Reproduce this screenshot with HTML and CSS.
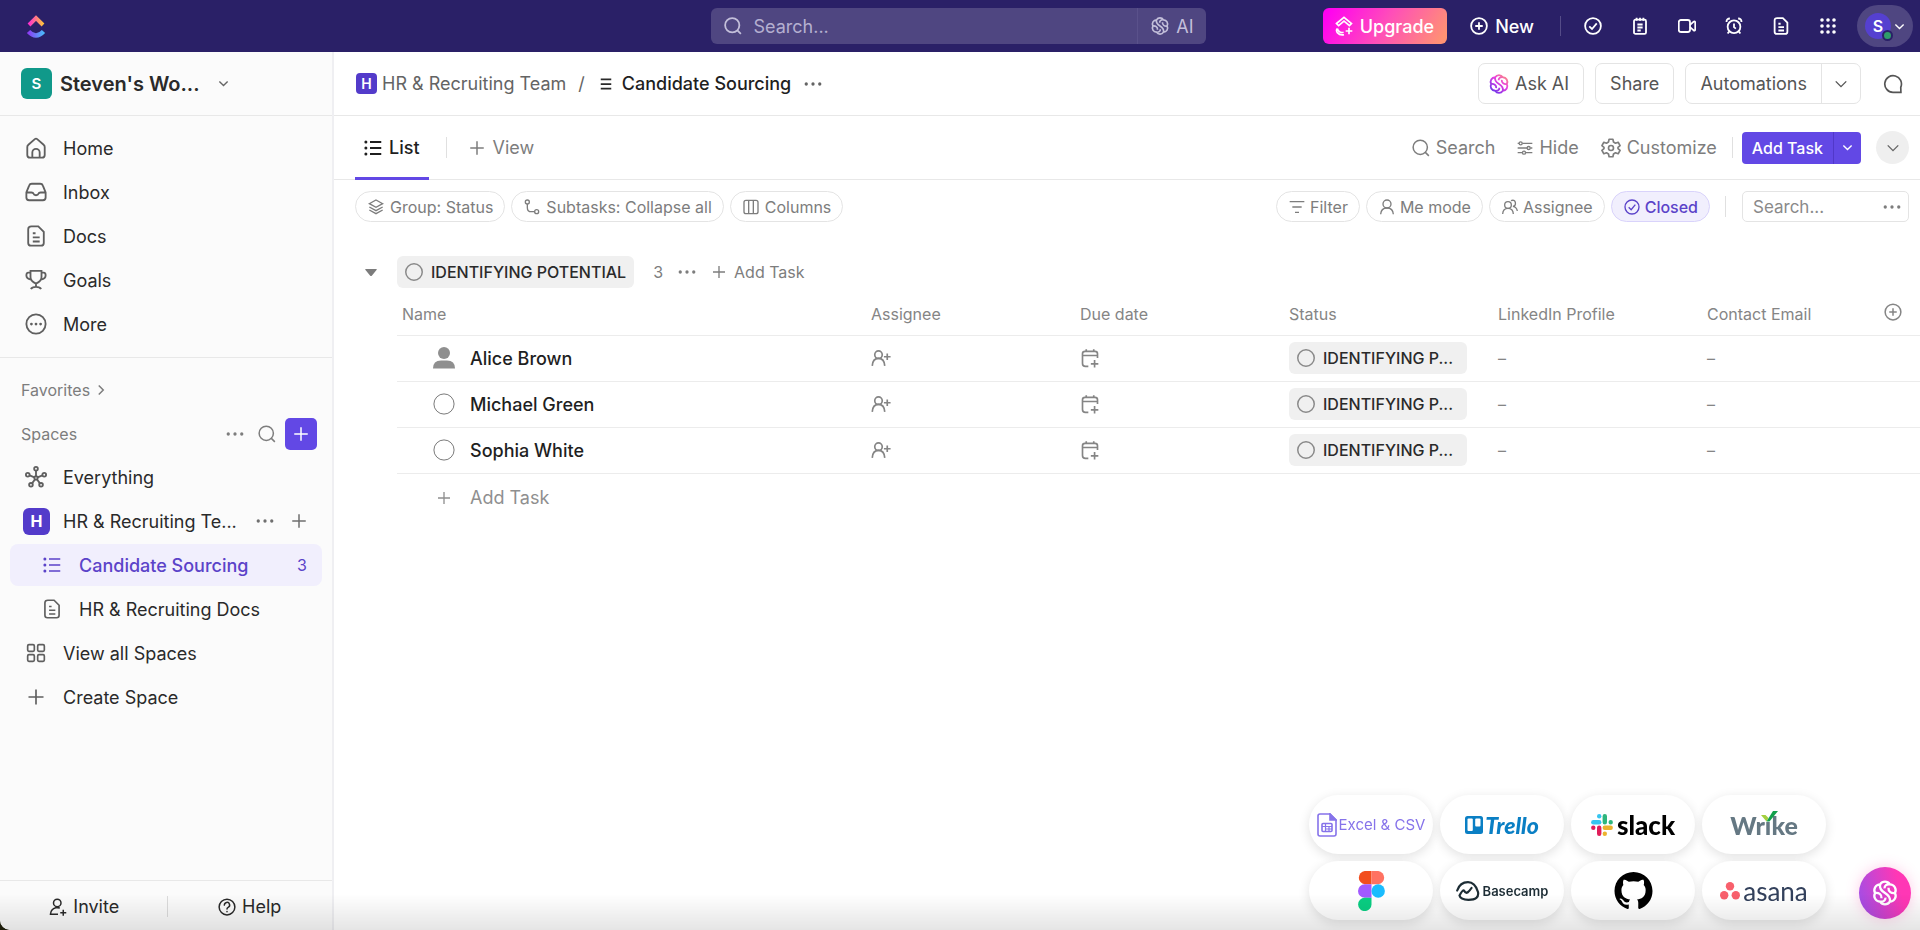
FILE: index.html
```html
<!DOCTYPE html>
<html lang="en">
<head>
    <meta charset="UTF-8">
    <meta name="viewport" content="width=device-width, initial-scale=1.0">
    <title>Candidate Sourcing | HR &amp; Recruiting Team</title>
    <link rel="stylesheet" href="styles.css">
</head>
<body>
    <!-- Icon sprite -->
    <svg class="sprite" aria-hidden="true">
        <defs>
            <linearGradient id="ai-grad" x1="1" y1="0" x2="0.2" y2="1">
                <stop offset="0" stop-color="#ff9a70"/>
                <stop offset="0.45" stop-color="#e83ee0"/>
                <stop offset="1" stop-color="#6a35ea"/>
            </linearGradient>
            <linearGradient id="logo-top" x1="0" y1="0" x2="1" y2="0">
                <stop offset="0" stop-color="#ff2fd0"/>
                <stop offset="1" stop-color="#ffc23d"/>
            </linearGradient>
            <linearGradient id="logo-bottom" x1="0" y1="0" x2="1" y2="0">
                <stop offset="0" stop-color="#8b3df5"/>
                <stop offset="1" stop-color="#4bb9fb"/>
            </linearGradient>
        </defs>
        <symbol id="i-search" viewBox="0 0 24 24"><circle cx="11" cy="11" r="9.5"/><path d="M17.5 17.5L22.5 22.5"/></symbol>
        <symbol id="i-ai" viewBox="0 0 24 24"><path d="M7.8 4.6A5 5 0 0 1 16.2 4.6A5 5 0 0 1 20.5 12A5 5 0 0 1 16.2 19.4A5 5 0 0 1 7.8 19.4A5 5 0 0 1 3.5 12A5 5 0 0 1 7.8 4.6C7 8.5 9.5 10.5 12 12S17 15.5 16.2 19.4M3.5 12C6.5 11.6 9.3 13 9 16.5M20.5 12C17.5 12.4 14.7 11 15 7.5M16.2 4.6C13.5 4.2 11.5 5.5 11.6 8M7.8 19.4C10.5 19.8 12.5 18.5 12.4 16"/></symbol>
        <symbol id="i-plus" viewBox="0 0 24 24"><path d="M12 3V21M3 12H21"/></symbol>
        <symbol id="i-plus-circle" viewBox="0 0 24 24"><circle cx="12" cy="12" r="10.5"/><path d="M12 7V17M7 12H17"/></symbol>
        <symbol id="i-check-circle" viewBox="0 0 24 24"><circle cx="12" cy="12" r="10.5"/><path d="M7 12.5L10.7 16L17 8.5"/></symbol>
        <symbol id="i-notepad" viewBox="0 0 24 24"><rect x="4" y="3.5" width="16" height="19" rx="2"/><path d="M7.5 1V5M12 1V5M16.5 1V5M8.5 10H15.5M8.5 14H15.5M8.5 18H13"/></symbol>
        <symbol id="i-video" viewBox="0 0 24 24"><rect x="1" y="4" width="15" height="16" rx="3"/><path d="M16 10.5L20.5 6.5Q23 5 23 8V16Q23 19 20.5 17.5L16 13.5"/></symbol>
        <symbol id="i-alarm" viewBox="0 0 24 24"><circle cx="12" cy="13" r="8.5"/><path d="M12 8.5V13.5L14.5 15.5M2 6.5Q2 2 6.5 2M22 6.5Q22 2 17.5 2M5.5 19.5L3.5 22M18.5 19.5L20.5 22"/></symbol>
        <symbol id="i-doc" viewBox="0 0 24 24"><path d="M7 1.5H14.5L20.5 7.5V19.5Q20.5 22.5 17.5 22.5H6.5Q3.5 22.5 3.5 19.5V4.5Q3.5 1.5 7 1.5ZM8.5 9H11.5M8.5 13.5H16M8.5 18H16"/></symbol>
        <symbol id="i-grid" viewBox="0 0 24 24"><path d="M4 4h.01M12 4h.01M20 4h.01M4 12h.01M12 12h.01M20 12h.01M4 20h.01M12 20h.01M20 20h.01" stroke-width="4.8" stroke-linecap="round"/></symbol>
        <symbol id="i-dots" viewBox="0 0 24 24"><path d="M3 12h.01M12 12h.01M21 12h.01" stroke-width="4.4" stroke-linecap="round"/></symbol>
        <symbol id="i-down" viewBox="0 0 24 24"><path d="M3 7.5L12 16.5L21 7.5"/></symbol>
        <symbol id="i-right" viewBox="0 0 24 24"><path d="M7.5 3L16.5 12L7.5 21"/></symbol>
        <symbol id="i-home" viewBox="0 0 24 24"><path d="M2.5 11Q2.5 9.5 3.7 8.5L10.7 2.3Q12 1.2 13.3 2.3L20.3 8.5Q21.5 9.5 21.5 11V19.5Q21.5 22.5 18.5 22.5H5.5Q2.5 22.5 2.5 19.5ZM8 22V17A4 4 0 0 1 16 17V22"/></symbol>
        <symbol id="i-inbox" viewBox="0 0 24 24"><path d="M1.5 12.5L4.5 5Q5.2 3 7.5 3H16.5Q18.8 3 19.5 5L22.5 12.5V18Q22.5 21 19.5 21H4.5Q1.5 21 1.5 18ZM1.5 12.5H7Q9 12.5 9.3 14Q9.8 15.5 12 15.5T14.7 14Q15 12.5 17 12.5H22.5"/></symbol>
        <symbol id="i-trophy" viewBox="0 0 24 24"><path d="M6 2H18V9Q18 13 12 16Q6 13 6 9ZM6 4H3.5Q1.5 4 1.5 7Q1.5 10.5 6.5 11.5M18 4H20.5Q22.5 4 22.5 7Q22.5 10.5 17.5 11.5M12 16V19M6.5 22Q7.5 19.5 12 19.5T17.5 22"/></symbol>
        <symbol id="i-more" viewBox="0 0 24 24"><circle cx="12" cy="12" r="10.5"/><path d="M7 12h.01M12 12h.01M17 12h.01" stroke-width="3" stroke-linecap="round"/></symbol>
        <symbol id="i-everything" viewBox="0 0 24 24"><circle cx="12" cy="13" r="1.8"/><circle cx="12" cy="3" r="2"/><circle cx="3" cy="9.5" r="2"/><circle cx="21" cy="9.5" r="2"/><circle cx="6.5" cy="20.5" r="2"/><circle cx="17.5" cy="20.5" r="2"/><path d="M12 5V11M5 10.3L10.3 12.4M19 10.3L13.7 12.4M7.7 19L11 14.5M16.3 19L13 14.5"/></symbol>
        <symbol id="i-list" viewBox="0 0 24 24"><path d="M8 4H23M8 12H23M8 20H23"/><path d="M2.5 4h.01M2.5 12h.01M2.5 20h.01" stroke-width="4" stroke-linecap="round"/></symbol>
        <symbol id="i-lines" viewBox="0 0 24 24"><path d="M3 4H21M3 12H21M3 20H21"/></symbol>
        <symbol id="i-spaces" viewBox="0 0 24 24"><rect x="2" y="2" width="8" height="8" rx="1.5"/><rect x="14" y="2" width="8" height="8" rx="1.5"/><rect x="2" y="14" width="8" height="8" rx="1.5"/><rect x="14" y="14" width="8" height="8" rx="1.5"/></symbol>
        <symbol id="i-invite" viewBox="0 0 24 24"><circle cx="11" cy="6.5" r="5"/><path d="M14.5 13.5Q12 12.5 9 13Q2.5 14.5 2 21.5H12M19 15.5V23.5M15 19.5H23"/></symbol>
        <symbol id="i-help" viewBox="0 0 24 24"><circle cx="12" cy="12" r="10.5"/><path d="M8.5 9.5A3.5 3.5 0 1 1 13.5 12.5Q12 13.2 12 14.8M12 18V18.2" stroke-linecap="round"/></symbol>
        <symbol id="i-chat" viewBox="0 0 24 24"><path d="M21.5 22L21.3 16A10 10 0 1 0 12 22Z"/></symbol>
        <symbol id="i-sliders" viewBox="0 0 24 24"><path d="M1 5H3M8 5H23M1 12H15M20 12H23M1 19H8M13 19H23"/><circle cx="5.5" cy="5" r="2.3"/><circle cx="17.5" cy="12" r="2.3"/><circle cx="10.5" cy="19" r="2.3"/></symbol>
        <symbol id="i-gear" viewBox="0 0 24 24"><path d="M9.7 1.5H14.3L15 4.8L17.4 6.2L20.6 5.1L22.9 9.1L20.4 11.3V12.7L22.9 14.9L20.6 18.9L17.4 17.8L15 19.2L14.3 22.5H9.7L9 19.2L6.6 17.8L3.4 18.9L1.1 14.9L3.6 12.7V11.3L1.1 9.1L3.4 5.1L6.6 6.2L9 4.8Z" stroke-linejoin="round"/><circle cx="12" cy="12" r="3"/></symbol>
        <symbol id="i-layers" viewBox="0 0 24 24"><path d="M12 1.5L22 7L12 12.5L2 7ZM2 12L12 17.5L22 12M2 16.5L12 22L22 16.5"/></symbol>
        <symbol id="i-subtask" viewBox="0 0 24 24"><circle cx="5" cy="4.5" r="3"/><circle cx="19" cy="19" r="3"/><path d="M5 7.5V13Q5 19 11 19H16"/></symbol>
        <symbol id="i-columns" viewBox="0 0 24 24"><rect x="1.5" y="2" width="21" height="20" rx="3"/><path d="M8.5 2V22M15.5 2V22"/></symbol>
        <symbol id="i-filter" viewBox="0 0 24 24"><path d="M1 4H23M5 12H19M9 20H15"/></symbol>
        <symbol id="i-user" viewBox="0 0 24 24"><circle cx="12" cy="7.5" r="6"/><path d="M2.5 23Q3 13.5 12 13.5T21.5 23"/></symbol>
        <symbol id="i-users" viewBox="0 0 24 24"><circle cx="9" cy="9" r="5"/><path d="M1 22.5Q1.5 14 9 14T17 22.5M13.5 2.5Q18.5 0.5 20 5Q21 10 16.5 11Q22 12 23 18"/></symbol>
        <symbol id="i-user-add" viewBox="0 0 24 24"><circle cx="9" cy="8" r="4.5"/><path d="M1.500 21.5Q2 12.5 9 12.5T16.5 21.5M19.5 6.5V14.5M15.5 10.5H23.5"/></symbol>
        <symbol id="i-date-add" viewBox="0 0 24 24"><path d="M10 22H6.5Q3 22 3 18.5V7Q3 4 6 4H18Q21 4 21 7V12M3 9H21M7.5 1.5V4M16.5 1.5V4M17.5 14.5V23.5M13 19H22"/></symbol>
        <symbol id="i-circle" viewBox="0 0 24 24"><circle cx="12" cy="12" r="11"/></symbol>
        <symbol id="i-upgrade" viewBox="0 0 24 24"><path d="M3 9L12 1.5L21 9L18.5 11.5L12 6L5.5 11.5ZM4 15Q6 21 11.5 19.5M4 15Q2 17 4 20Q7 23.5 12 22.5M18 14V22M14 18H22"/></symbol>
    </svg>

    <header class="topbar">
        <a class="brand" href="#" aria-label="ClickUp home">
            <svg width="20" height="30" viewBox="0 0 20 30">
                <path d="M3 14L10 7L17 14" fill="none" stroke="url(#logo-top)" stroke-width="4"/>
                <path d="M2.500 20.500Q10 28.500 17.500 20.500" fill="none" stroke="url(#logo-bottom)" stroke-width="4.500"/>
            </svg>
        </a>
        <div class="global-search">
            <svg class="icon s18"><use href="#i-search"/></svg>
            <input type="text" placeholder="Search..." aria-label="Search workspace">
            <button class="search-ai"><svg class="icon s20"><use href="#i-ai"/></svg>AI</button>
        </div>
        <div class="top-actions">
            <button class="upgrade"><svg class="icon s20"><use href="#i-upgrade"/></svg>Upgrade</button>
            <button class="new"><svg class="icon s18"><use href="#i-plus-circle"/></svg>New</button>
            <span class="top-divider"></span>
            <div class="top-icons">
                <button aria-label="Tasks"><svg class="icon s18"><use href="#i-check-circle"/></svg></button>
                <button aria-label="Notepad"><svg class="icon s18"><use href="#i-notepad"/></svg></button>
                <button aria-label="Clips"><svg class="icon s18"><use href="#i-video"/></svg></button>
                <button aria-label="Reminders"><svg class="icon s18"><use href="#i-alarm"/></svg></button>
                <button aria-label="Docs"><svg class="icon s18"><use href="#i-doc"/></svg></button>
                <button aria-label="Apps"><svg class="icon s18"><use href="#i-grid"/></svg></button>
            </div>
            <button class="account" aria-label="Account">
                <span class="avatar">S<span class="online"></span></span>
                <svg class="icon s10"><use href="#i-down"/></svg>
            </button>
        </div>
    </header>

    <div class="app">
        <aside class="sidebar">
            <button class="workspace">
                <span class="workspace-logo">S</span>
                <span class="workspace-name">Steven's Wo...</span>
                <svg class="icon s10"><use href="#i-down"/></svg>
            </button>
            <nav class="side-nav main-nav">
                <a href="#"><svg class="icon s22"><use href="#i-home"/></svg>Home</a>
                <a href="#"><svg class="icon s22"><use href="#i-inbox"/></svg>Inbox</a>
                <a href="#"><svg class="icon s22"><use href="#i-doc"/></svg>Docs</a>
                <a href="#"><svg class="icon s22"><use href="#i-trophy"/></svg>Goals</a>
                <a href="#"><svg class="icon s22"><use href="#i-more"/></svg>More</a>
            </nav>
            <div class="side-title favorites">Favorites <svg class="icon s12"><use href="#i-right"/></svg></div>
            <div class="side-title spaces">
                <span>Spaces</span>
                <button aria-label="Space options"><svg class="icon s18"><use href="#i-dots"/></svg></button>
                <button aria-label="Search spaces"><svg class="icon s18"><use href="#i-search"/></svg></button>
                <button class="add-space" aria-label="Add space"><svg class="icon s18"><use href="#i-plus"/></svg></button>
            </div>
            <nav class="side-nav">
                <a href="#"><svg class="icon s22"><use href="#i-everything"/></svg>Everything</a>
                <div class="space-row">
                    <a href="#"><span class="space-logo">H</span>HR &amp; Recruiting Te...</a>
                    <button aria-label="Space menu"><svg class="icon s18"><use href="#i-dots"/></svg></button>
                    <button aria-label="Add to space"><svg class="icon s18"><use href="#i-plus"/></svg></button>
                </div>
                <a class="child active" href="#"><svg class="icon s18"><use href="#i-list"/></svg>Candidate Sourcing<span class="count">3</span></a>
                <a class="child" href="#"><svg class="icon s20"><use href="#i-doc"/></svg>HR &amp; Recruiting Docs</a>
                <a href="#"><svg class="icon s20"><use href="#i-spaces"/></svg>View all Spaces</a>
                <a href="#"><svg class="icon s20"><use href="#i-plus"/></svg>Create Space</a>
            </nav>
            <div class="side-footer">
                <button><svg class="icon s18"><use href="#i-invite"/></svg>Invite</button>
                <button><svg class="icon s18"><use href="#i-help"/></svg>Help</button>
            </div>
        </aside>

        <main class="main">
            <div class="bar page-header">
                <nav class="breadcrumb">
                    <span class="space-logo small">H</span>
                    <a href="#">HR &amp; Recruiting Team</a>
                    <span class="slash">/</span>
                    <svg class="icon s14 dark"><use href="#i-lines"/></svg>
                    <span class="current">Candidate Sourcing</span>
                    <button aria-label="List menu"><svg class="icon s18"><use href="#i-dots"/></svg></button>
                </nav>
                <div class="header-actions">
                    <button class="outline-btn"><svg class="icon s22 ai-color"><use href="#i-ai"/></svg>Ask AI</button>
                    <button class="outline-btn">Share</button>
                    <div class="outline-group">
                        <button>Automations</button>
                        <button class="drop" aria-label="Automation options"><svg class="icon s14"><use href="#i-down"/></svg></button>
                    </div>
                    <button class="chat" aria-label="Comments"><svg class="icon s20"><use href="#i-chat"/></svg></button>
                </div>
            </div>

            <div class="bar tabs">
                <button class="tab selected"><svg class="icon s18"><use href="#i-list"/></svg>List</button>
                <button class="tab add-view"><svg class="icon s18"><use href="#i-plus"/></svg>View</button>
                <div class="view-tools">
                    <button><svg class="icon s18"><use href="#i-search"/></svg>Search</button>
                    <button><svg class="icon s16"><use href="#i-sliders"/></svg>Hide</button>
                    <button><svg class="icon s20"><use href="#i-gear"/></svg>Customize</button>
                </div>
                <div class="add-task">
                    <button>Add Task</button>
                    <button class="drop" aria-label="Add task options"><svg class="icon s10"><use href="#i-down"/></svg></button>
                </div>
                <button class="collapse" aria-label="Collapse header"><svg class="icon s14"><use href="#i-down"/></svg></button>
            </div>

            <div class="filters">
                <button class="pill"><svg class="icon s16"><use href="#i-layers"/></svg>Group: Status</button>
                <button class="pill"><svg class="icon s16"><use href="#i-subtask"/></svg>Subtasks: Collapse all</button>
                <button class="pill"><svg class="icon s16"><use href="#i-columns"/></svg>Columns</button>
                <div class="quick-filters">
                    <button class="pill"><svg class="icon s16"><use href="#i-filter"/></svg>Filter</button>
                    <button class="pill"><svg class="icon s16"><use href="#i-user"/></svg>Me mode</button>
                    <button class="pill"><svg class="icon s16"><use href="#i-users"/></svg>Assignee</button>
                    <button class="pill on"><svg class="icon s16"><use href="#i-check-circle"/></svg>Closed</button>
                </div>
                <div class="task-search">
                    <input type="text" placeholder="Search..." aria-label="Search tasks">
                    <button aria-label="Search options"><svg class="icon s18"><use href="#i-dots"/></svg></button>
                </div>
            </div>

            <section class="group">
                <div class="group-header">
                    <button class="toggle" aria-label="Collapse group"><svg width="12" height="7" viewBox="0 0 12 7"><path d="M1 0H11Q12.500 0 11.500 1L7 6.500Q6 7.500 5 6.500L0.500 1Q-0.500 0 1 0Z" fill="#7c7c7c"/></svg></button>
                    <button class="status"><svg class="icon s18"><use href="#i-circle"/></svg>IDENTIFYING POTENTIAL</button>
                    <span class="group-count">3</span>
                    <button aria-label="Group menu"><svg class="icon s18"><use href="#i-dots"/></svg></button>
                    <button class="group-add"><svg class="icon s16"><use href="#i-plus"/></svg>Add Task</button>
                </div>
                <table class="tasks">
                    <colgroup>
                        <col><col class="col-field"><col class="col-field"><col class="col-field"><col class="col-field"><col class="col-email"><col class="col-add">
                    </colgroup>
                    <thead>
                        <tr>
                            <th>Name</th>
                            <th>Assignee</th>
                            <th>Due date</th>
                            <th>Status</th>
                            <th>LinkedIn Profile</th>
                            <th>Contact Email</th>
                            <th class="center"><button aria-label="Add column"><svg class="icon s18"><use href="#i-plus-circle"/></svg></button></th>
                        </tr>
                    </thead>
                    <tbody>
                        <tr>
                            <td><div class="task-name">
                                <svg width="22" height="22" viewBox="0 0 22 22" fill="#8f8f8f"><circle cx="11" cy="6" r="6"/><path d="M0 21.500Q0 13.500 8 13.500H14Q22 13.500 22 21.500Z"/></svg>
                                Alice Brown</div></td>
                            <td><svg class="icon s20"><use href="#i-user-add"/></svg></td>
                            <td><svg class="icon s20"><use href="#i-date-add"/></svg></td>
                            <td><button class="status cell"><svg class="icon s18"><use href="#i-circle"/></svg>IDENTIFYING P...</button></td>
                            <td>–</td>
                            <td>–</td>
                            <td></td>
                        </tr>
                        <tr>
                            <td><div class="task-name"><svg class="icon s22 thin"><use href="#i-circle"/></svg>Michael Green</div></td>
                            <td><svg class="icon s20"><use href="#i-user-add"/></svg></td>
                            <td><svg class="icon s20"><use href="#i-date-add"/></svg></td>
                            <td><button class="status cell"><svg class="icon s18"><use href="#i-circle"/></svg>IDENTIFYING P...</button></td>
                            <td>–</td>
                            <td>–</td>
                            <td></td>
                        </tr>
                        <tr>
                            <td><div class="task-name"><svg class="icon s22 thin"><use href="#i-circle"/></svg>Sophia White</div></td>
                            <td><svg class="icon s20"><use href="#i-user-add"/></svg></td>
                            <td><svg class="icon s20"><use href="#i-date-add"/></svg></td>
                            <td><button class="status cell"><svg class="icon s18"><use href="#i-circle"/></svg>IDENTIFYING P...</button></td>
                            <td>–</td>
                            <td>–</td>
                            <td></td>
                        </tr>
                    </tbody>
                </table>
                <button class="row-add"><svg class="icon s16"><use href="#i-plus"/></svg>Add Task</button>
            </section>
        </main>
    </div>

    <!-- Import sources -->
    <div class="imports">
        <button class="excel">
            <svg width="20" height="24" viewBox="0 0 20 24" fill="none" stroke="#8673ea" stroke-width="1.600"><path d="M13 1H3Q1 1 1 3V21Q1 23 3 23H17Q19 23 19 21V7Z"/><path d="M13 1V7H19Z" fill="#8673ea"/><rect x="5" y="10.500" width="10" height="8" rx="1"/><path d="M5 13.500H15M8.500 10.500V18.500M8.500 16H15M12 13.500V18.500" stroke-width="1.200"/></svg>
            Excel &amp; CSV
        </button>
        <button class="trello">
            <svg width="18" height="18" viewBox="0 0 18 18"><rect width="18" height="18" rx="2.500" fill="#0a7fc4"/><rect x="2.500" y="2.500" width="5.300" height="12.500" rx="1" fill="#fff"/><rect x="10.200" y="2.500" width="5.300" height="8" rx="1" fill="#fff"/></svg>
            Trello
        </button>
        <button class="slack">
            <svg width="22" height="22" viewBox="0 0 22 22" stroke-width="4.400" stroke-linecap="round"><path d="M8.200 2.300h.01" stroke="#36c5f0"/><path d="M2.300 8.200H8.200" stroke="#36c5f0"/><path d="M13.800 2.300V8.200M19.700 8.200h.01" stroke="#2eb67d"/><path d="M19.700 13.800H13.800M13.800 19.700h.01" stroke="#ecb22e"/><path d="M8.200 19.700V13.800M2.300 13.800h.01" stroke="#e01e5a"/></svg>
            slack
        </button>
        <button class="wrike" aria-label="Wrike"><span>Wr<span class="wrike-i">ı<svg width="17" height="11" viewBox="0 0 17 11"><path d="M0 4L4.500 4L7.500 7L5.500 10.500Z" fill="#a4cf3f"/><path d="M5.500 10.500L12 0H17L8.500 10.500Z" fill="#12a04b"/></svg></span>ke</span></button>
        <button aria-label="Figma">
            <svg width="27" height="40" viewBox="0 0 27 40"><path d="M13.500 0H6.700A6.700 6.700 0 0 0 6.700 13.300H13.500Z" fill="#f24e1e"/><path d="M13.500 0H20.300A6.700 6.700 0 0 1 20.300 13.300H13.500Z" fill="#ff7262"/><path d="M13.500 13.300H6.700A6.700 6.700 0 0 0 6.700 26.700H13.500Z" fill="#a259ff"/><circle cx="20.200" cy="20" r="6.700" fill="#1abcfe"/><path d="M13.500 26.700H6.700A6.700 6.700 0 1 0 13.500 33.300Z" fill="#0acf83"/></svg>
        </button>
        <button class="basecamp">
            <svg width="24" height="20" viewBox="0 0 24 20" fill="none" stroke="#1d2d35" stroke-width="2.200" stroke-linecap="round" stroke-linejoin="round"><path d="M1.200 9.500Q4 1.200 12 1.200Q19 1.200 22 11Q23.500 18.800 12.500 18.800Q4.500 18.800 3.500 14.500Q6.500 9 8 9.500Q9.500 12.500 11.500 11.500Q13.500 10 15.500 7"/></svg>
            Basecamp
        </button>
        <button aria-label="GitHub">
            <svg width="39" height="38" viewBox="0 0 16 16"><path d="M8 0C3.580 0 0 3.580 0 8c0 3.540 2.290 6.530 5.470 7.590.4.070.55-.17.55-.38 0-.19-.01-.82-.01-1.490-2.010.37-2.530-.49-2.690-.94-.09-.23-.48-.94-.82-1.130-.28-.15-.68-.52-.01-.53.63-.01 1.080.58 1.230.82.72 1.210 1.870.87 2.330.66.070-.52.280-.87.510-1.070-1.780-.2-3.640-.89-3.640-3.950 0-.87.310-1.590.82-2.150-.08-.2-.36-1.020.08-2.120 0 0 .67-.21 2.200.82.640-.18 1.320-.27 2-.27s1.360.09 2 .27c1.530-1.040 2.200-.82 2.200-.82.44 1.100.16 1.920.08 2.120.51.56.82 1.270.82 2.150 0 3.070-1.870 3.750-3.650 3.950.29.25.54.73.54 1.480 0 1.070-.01 1.930-.01 2.200 0 .21.15.46.55.38A8.010 8.010 0 0 0 16 8c0-4.420-3.580-8-8-8z"/></svg>
        </button>
        <button class="asana">
            <svg width="20" height="18" viewBox="0 0 20 18" fill="#f8606c"><circle cx="10" cy="4.200" r="4.200"/><circle cx="4.200" cy="13.300" r="4.200"/><circle cx="15.800" cy="13.300" r="4.200"/></svg>
            asana
        </button>
    </div>
    <button class="ai-fab" aria-label="Ask AI"><svg class="icon s28"><use href="#i-ai"/></svg></button>
    <div class="bottom-fade"></div>
</body>
</html>
```
FILE: styles.css
```css
* {
    box-sizing: border-box;
}
html {
    background: #20200c;
}
body {
    margin: 0;
    min-height: 100vh;
    display: flex;
    flex-direction: column;
    font-family: Inter, "Noto Sans", sans-serif;
    font-size: 18px;
    color: #2a2a2a;
    background: #fff;
    border-bottom-left-radius: 10px;
}
button {
    font: inherit;
    color: inherit;
    background: none;
    border: 0;
    padding: 0;
    display: inline-flex;
    align-items: center;
    cursor: pointer;
}
input {
    font: inherit;
    border: 0;
    outline: 0;
    background: none;
    padding: 0;
    min-width: 0;
}
a {
    color: inherit;
    text-decoration: none;
}
.sprite {
    position: absolute;
    width: 0;
    height: 0;
}

/* Icons */
.icon {
    flex: none;
    fill: none;
    stroke: currentColor;
    stroke-width: 2;
}
.s10 { width: 11px; height: 11px; stroke-width: 3; }
.s12 { width: 12px; height: 12px; stroke-width: 3; }
.s14 { width: 14px; height: 14px; stroke-width: 3; }
.s16 { width: 16px; height: 16px; }
.s18 { width: 18px; height: 18px; }
.s20 { width: 20px; height: 20px; }
.s22 { width: 22px; height: 22px; }
.s28 { width: 28px; height: 28px; }
.thin { stroke-width: 1; }
.dark { color: #2a2a2a; }
.ai-color { stroke: url(#ai-grad); }

/* Top bar */
.topbar {
    display: grid;
    grid-template-columns: 1fr 495px 1fr;
    align-items: center;
    height: 52px;
    padding: 0 7px 0 3px;
    background: #2a2067;
    color: #fff;
}
.topbar .s18 {
    stroke-width: 2.4;
}
.brand {
    display: flex;
    padding-left: 23px;
}
.global-search {
    display: flex;
    align-items: center;
    gap: 12px;
    height: 36px;
    padding-left: 13px;
    border-radius: 6px;
    background: #4f4681;
    color: #c3bfda;
}
.global-search input {
    flex: 1;
    color: #fff;
}
.global-search input::placeholder {
    color: #b4afd0;
}
.search-ai {
    gap: 6px;
    height: 36px;
    padding: 0 12px;
    border-left: 1px solid #5a518b;
}
.top-actions {
    display: flex;
    align-items: center;
    justify-content: flex-end;
}
.upgrade {
    gap: 6px;
    height: 36px;
    padding: 0 13px 0 11px;
    border-radius: 6px;
    background: linear-gradient(120deg, #ff02f0 5%, #ff4fb8 50%, #ff9273 95%);
    font-weight: 500;
    margin-right: 23px;
}
.new {
    gap: 7px;
    font-weight: 500;
}
.top-divider {
    width: 1px;
    height: 20px;
    margin: 0 23px 0 26px;
    background: #554c88;
}
.top-icons {
    display: flex;
    gap: 29px;
    margin-right: 20px;
}
.account {
    gap: 3px;
    height: 42px;
    padding: 0 8px;
    border-radius: 21px;
    background: #4f4681;
}
.avatar {
    position: relative;
    width: 26px;
    height: 26px;
    border-radius: 50%;
    background: #5540d0;
    font-size: 16px;
    font-weight: 600;
    line-height: 26px;
    text-align: center;
}
.online {
    position: absolute;
    right: -2px;
    bottom: -2px;
    width: 11px;
    height: 11px;
    border: 2px solid #2a2067;
    border-radius: 50%;
    background: #2f9c6a;
}

/* Layout */
.app {
    flex: 1;
    display: flex;
}
.sidebar {
    flex: none;
    width: 334px;
    display: flex;
    flex-direction: column;
    background: #fbfbfb;
    border-right: 2px solid #efeff2;
    border-bottom-left-radius: 10px;
}
.main {
    flex: 1;
    min-width: 0;
}

/* Sidebar */
.workspace {
    height: 64px;
    padding: 0 21px;
    gap: 8px;
    border-bottom: 1px solid #e8e8e8;
    font-size: 20px;
    font-weight: 600;
}
.workspace .icon {
    margin-left: 10px;
    color: #666;
}
.workspace-logo {
    width: 31px;
    height: 31px;
    border-radius: 6px;
    background: #10998a;
    color: #fff;
    font-size: 15px;
    line-height: 31px;
    text-align: center;
}
.side-nav {
    display: flex;
    flex-direction: column;
    gap: 2px;
    padding: 0 10px;
}
.side-nav a {
    flex: 1;
    min-width: 0;
    display: flex;
    align-items: center;
    gap: 16px;
    min-height: 42px;
    padding: 0 15px;
    border-radius: 8px;
    white-space: nowrap;
}
.side-nav a > .icon {
    color: #5f5f5f;
}
.side-nav .s20 {
    margin: 0 1px;
}
.main-nav {
    padding: 11px 10px 12px;
    border-bottom: 1px solid #e8e8e8;
}
.side-title {
    display: flex;
    align-items: center;
    padding: 0 15px 0 21px;
    font-size: 16px;
    color: #7d7d7d;
}
.favorites {
    gap: 5px;
    margin-top: 21px;
    height: 22px;
}
.spaces {
    gap: 14px;
    height: 32px;
    margin: 17px 0 6px;
}
.spaces span {
    flex: 1;
}
.add-space {
    width: 32px;
    height: 32px;
    justify-content: center;
    margin-left: -5px;
    border-radius: 5px;
    background: #6248e5;
    color: #fff;
}
.space-row {
    display: flex;
    align-items: center;
    gap: 16px;
    padding-right: 14px;
    color: #6f6f6f;
}
.space-row a {
    padding: 0 0 0 13px;
    gap: 13px;
    color: #2a2a2a;
}
.space-logo {
    flex: none;
    width: 27px;
    height: 27px;
    border-radius: 6px;
    background: #533bca;
    color: #fff;
    font-size: 16px;
    font-weight: 700;
    line-height: 27px;
    text-align: center;
}
.space-logo.small {
    width: 21px;
    height: 21px;
    border-radius: 4px;
    font-size: 14px;
    font-weight: 600;
    line-height: 21px;
}
.side-nav .child {
    padding-left: 31px;
}
.side-nav .child .s18 {
    margin: 0 2px;
}
.side-nav .active,
.side-nav .active > .icon {
    color: #5b43c9;
}
.side-nav .active {
    background: #f1effd;
    font-weight: 500;
}
.count {
    margin-left: auto;
    font-size: 16px;
    font-weight: 400;
}
.side-footer {
    display: flex;
    align-items: center;
    height: 50px;
    margin-top: auto;
    padding: 2px 0 0 2px;
    border-top: 1px solid #e8e8e8;
}
.side-footer button {
    flex: 1;
    justify-content: center;
    gap: 6px;
    height: 21px;
}
.side-footer button + button {
    border-left: 1px solid #dcdcdc;
}

/* Header bars */
.bar {
    display: flex;
    align-items: center;
    height: 64px;
    border-bottom: 1px solid #e8e8e8;
    color: #7d7d7d;
}
.page-header {
    justify-content: space-between;
    padding: 0 17px 0 22px;
}
.breadcrumb {
    display: flex;
    align-items: center;
    gap: 5px;
    color: #646464;
}
.slash {
    margin: 0 9px 0 7px;
}
.current {
    margin: 0 8px 0 4px;
    color: #1f1f1f;
    font-weight: 500;
}
.header-actions {
    display: flex;
    gap: 11px;
    color: #555;
}
.outline-btn,
.outline-group {
    height: 41px;
    border: 1px solid #e4e4e4;
    border-radius: 7px;
}
.outline-btn {
    gap: 5px;
    padding: 0 14px;
}
.outline-btn .icon {
    margin-left: -5px;
}
.outline-group {
    display: flex;
}
.outline-group button {
    padding: 0 14px;
}
.outline-group .drop {
    padding: 0 12px;
    border-left: 1px solid #e4e4e4;
}
.drop .s14,
.collapse .s14 {
    stroke-width: 2.4;
}
.chat {
    margin-left: 11px;
}
.tabs {
    padding: 0 11px 0 21px;
}
.tab {
    gap: 7px;
    height: 64px;
    padding: 0 9px;
}
.tab.selected {
    color: #1f1f1f;
    font-weight: 500;
    border-bottom: 3px solid #6248e5;
    padding-top: 3px;
}
.tab.selected .icon {
    stroke-width: 2.6;
}
.add-view {
    height: 21px;
    margin-left: 17px;
    padding-left: 21px;
    border-left: 1px solid #e0e0e0;
}
.view-tools {
    display: flex;
    align-items: center;
    gap: 22px;
    height: 21px;
    margin-left: auto;
    padding-right: 15px;
    margin-right: 9px;
    border-right: 1px solid #e0e0e0;
}
.view-tools button {
    gap: 6px;
}
.add-task {
    display: flex;
    height: 32px;
    border-radius: 4px;
    background: #6248e5;
    color: #fff;
    font-size: 16px;
    font-weight: 500;
}
.add-task button {
    padding: 0 10px;
}
.add-task .drop {
    padding: 0 8px;
    border-left: 1px solid #5138c9;
}
.collapse {
    width: 33px;
    height: 33px;
    margin-left: 15px;
    justify-content: center;
    border-radius: 50%;
    background: #efefef;
    color: #666;
}

/* Filters */
.filters {
    display: flex;
    align-items: center;
    gap: 6px;
    padding: 11px 11px 0 21px;
    font-size: 16px;
    color: #7d7d7d;
}
.pill {
    gap: 6px;
    height: 31px;
    padding: 0 11px 0 12px;
    border: 1px solid #e4e4e4;
    border-radius: 16px;
    white-space: nowrap;
}
.quick-filters {
    display: flex;
    align-items: center;
    gap: 6px;
    margin-left: auto;
}
.quick-filters .pill {
    gap: 5px;
}
/* divider before the search box */
.quick-filters::after {
    content: "";
    width: 1px;
    height: 21px;
    margin: 0 10px 0 9px;
    background: #e0e0e0;
}
.pill.on {
    border-color: #d9d3fb;
    background: #f1effd;
    color: #5b43c9;
    font-weight: 500;
}
.task-search {
    display: flex;
    align-items: center;
    width: 167px;
    height: 31px;
    padding: 0 7px 0 10px;
    border: 1px solid #e4e4e4;
    border-radius: 5px;
    font-size: 17px;
}
.task-search input {
    flex: 1;
}
.task-search input::placeholder {
    color: #8a8a8a;
}

/* Task group */
.group {
    padding: 34px 0 0 63px;
}
.group-header {
    display: flex;
    align-items: center;
    height: 32px;
    margin-left: -32px;
    font-size: 16px;
    color: #7d7d7d;
}
.toggle {
    margin-right: 20px;
}
.status {
    gap: 8px;
    height: 32px;
    padding: 0 8px;
    border-radius: 6px;
    background: #f0f0f0;
    color: #2a2a2a;
    font-size: 16px;
    font-weight: 500;
    white-space: nowrap;
}
.status .icon {
    color: #8a8a8a;
}
.group-count {
    margin: 0 15px 0 19px;
}
.group-add {
    gap: 7px;
    margin-left: 15px;
}
.tasks {
    width: 100%;
    table-layout: fixed;
    border-collapse: collapse;
    font-size: 16px;
    color: #858585;
}
.col-field { width: 209px; }
.col-email { width: 167px; }
.col-add { width: 54px; }
.tasks th,
.tasks td {
    height: 46px;
    padding: 0 8px;
    border-bottom: 1px solid #ececec;
    text-align: left;
    font-weight: 400;
}
.tasks th {
    height: 47px;
    padding-top: 6px;
}
.tasks th:first-child {
    padding-left: 5px;
}
.tasks .center {
    text-align: center;
}
.tasks .icon {
    display: block;
}
.task-name {
    display: flex;
    align-items: center;
    gap: 15px;
    padding-left: 28px;
    font-size: 18px;
    color: #1f1f1f;
    font-weight: 500;
}
.task-name .icon {
    color: #6d6d6d;
}
.status.cell {
    width: 178px;
}
.row-add {
    gap: 18px;
    height: 48px;
    padding-left: 39px;
    color: #8f8f8f;
}

/* Import shortcuts */
.imports {
    position: fixed;
    right: 94px;
    bottom: 10px;
    display: grid;
    grid-template-columns: repeat(4, 124px);
    gap: 7px;
}
.imports button {
    justify-content: center;
    gap: 4px;
    height: 59px;
    border-radius: 30px;
    background: #fff;
    box-shadow: 0 3px 12px rgba(0, 0, 0, 0.12);
    white-space: nowrap;
}
.imports .excel {
    gap: 2px;
    font-size: 15px;
    color: #8673ea;
}
.imports .trello {
    gap: 2px;
    color: #0a7fc4;
    font-family: Lato, sans-serif;
    font-size: 23px;
    font-style: italic;
    font-weight: 900;
}
.imports .slack {
    color: #000;
    font-family: Lato, sans-serif;
    font-size: 26px;
    font-weight: 900;
}
.imports .wrike {
    color: #657883;
    font-family: Lato, sans-serif;
    font-size: 25px;
    font-weight: 900;
}
.wrike-i {
    position: relative;
}
.wrike-i svg {
    position: absolute;
    left: -4px;
    top: 1px;
}
.imports .basecamp {
    gap: 3px;
    color: #1d2d35;
    font-size: 13px;
    font-weight: 600;
}
.imports .asana {
    gap: 3px;
    color: #33415c;
    font-family: Lato, sans-serif;
    font-size: 26px;
}
.ai-fab {
    position: fixed;
    right: 9px;
    bottom: 11px;
    width: 52px;
    height: 52px;
    justify-content: center;
    border-radius: 50%;
    background: linear-gradient(75deg, #9a50ea, #ff37b5 75%);
    box-shadow: 0 0 14px rgba(255, 90, 180, 0.3);
    color: #fff;
}
.bottom-fade {
    position: fixed;
    left: 0;
    right: 0;
    bottom: 0;
    height: 36px;
    background: linear-gradient(rgba(0, 0, 0, 0), rgba(0, 0, 0, 0.1));
    pointer-events: none;
}
```
